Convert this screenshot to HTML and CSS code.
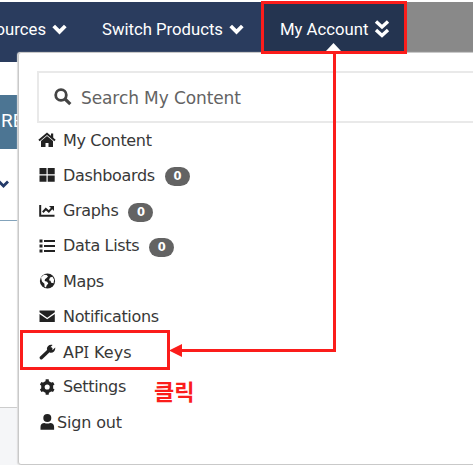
FILE: index.html
```html
<!DOCTYPE html>
<html lang="en">
<head>
<meta charset="utf-8">
<title>My Account</title>
<link rel="stylesheet" href="styles.css">
</head>
<body>
<nav class="nav">
  <div class="nav-item resources"><span>ources</span><svg class="chev" width="15" height="11" viewBox="0 0 15 11"><path d="M1.700 2l5.800 5.800L13.300 2"/></svg></div>
  <div class="nav-item products"><span>Switch Products</span><svg class="chev" width="15" height="11" viewBox="0 0 15 11"><path d="M1.700 2l5.800 5.800L13.300 2"/></svg></div>
  <div class="nav-item account"><span>My Account</span><svg class="chev double" width="16" height="20" viewBox="0 0 16 20"><path d="M2 2.500l6 5.500 6-5.500M2 11l6 5.500 6-5.500"/></svg></div>
  <div class="nav-rest"></div>
</nav>
<main class="page">
  <div class="banner">RE</div>
  <div class="filter"><svg width="10" height="9" viewBox="0 0 10 9"><path d="M-1 1.500L3.500 6 8 1.500" fill="none" stroke="#233a68" stroke-width="2.800"/></svg></div>
  <div class="blank"></div>
  <div class="footer"></div>
</main>
<section class="panel">
  <div class="search"><svg width="18" height="18" viewBox="0 0 18 18"><circle cx="7" cy="7" r="5.3" fill="none" stroke="#444" stroke-width="2.8"/><path d="M11 11l5.3 5.2" stroke="#444" stroke-width="3.2"/></svg><span>Search My Content</span></div>
  <ul class="menu">
    <li><svg viewBox="0 0 18 16"><path d="M1 8.500L9 1.800l8 6.700" fill="none" stroke="#222" stroke-width="2"/><path d="M13 1.500h2.200v5L13 4.800zM3 9l6-5 6 5v6h-4.500v-4h-3v4H3z"/></svg><span>My Content</span></li>
    <li><svg viewBox="0 0 18 16"><path d="M1.500 1h7v6.300h-7zM9.700 1h7v6.300h-7zM1.500 8.500h7v6.300h-7zM9.700 8.500h7v6.300h-7z"/></svg><span>Dashboards</span><b>0</b></li>
    <li><svg viewBox="0 0 18 16"><path d="M2.200 2v10.800h14.300M4.800 9.200l3-3.200 3 2.600 3.600-4" fill="none" stroke="#222" stroke-width="2"/><path d="M11 3h5v5z"/></svg><span>Graphs</span><b>0</b></li>
    <li><svg viewBox="0 0 18 16"><path d="M1.500 1.500h3v3h-3zM1.500 6.500h3v3h-3zM1.500 11.500h3v3h-3zM6 2h11v2H6zM6 7h11v2H6zM6 12h11v2H6z"/></svg><span>Data Lists</span><b>0</b></li>
    <li><svg viewBox="0 0 18 16"><circle cx="9.500" cy="8" r="7.600"/><path d="M3 4.500l3-2.700 2.600.1L10 3.500 8.500 5 7 6.200 6.700 8l2.400.8 1.200 1.700-1.600 1.800-.8 2.200-1.300-.8-.2-3L4 8.500zM12 4.500l2.500-.7 1.600 3-.6 3.500-2.300-.5-.7-2-1.500-.6z" fill="#fff"/></svg><span>Maps</span></li>
    <li><svg viewBox="0 0 18 16"><path d="M1.500 2.500h15.300v1.800L9.200 9.800 1.500 4.300zM1.500 6l7.700 5.300L16.800 6v8H1.500z"/></svg><span>Notifications</span></li>
    <li><svg viewBox="0 0 18 16"><path d="M12.800 4.800L3.300 13.800" stroke="#222" stroke-width="3.300" stroke-linecap="round"/><path d="M14.600.9l-2.300 2.300.5 2.100 2.100.5 2.300-2.300c.5 3.300-2.200 6-5.500 5.100L9 5.500C8.300 2.400 11.300-.1 14.600.9z"/></svg><span class="keys">AP<i>I</i> Keys</span></li>
    <li><svg viewBox="0 0 18 16"><circle cx="9.200" cy="8" r="4.300" fill="none" stroke="#222" stroke-width="3.500"/><path d="M7.400 3L7.700.3h3L11 3zM7.400 13l.3 2.700h3L11 13zM12.500 4l2.500-1 1.500 2.600-2.100 1.700zM12.500 12l2.500 1 1.500-2.600-2.100-1.700zM5.900 4l-2.500-1-1.500 2.600L4 7.300zM5.900 12l-2.500 1-1.500-2.600L4 8.700z"/></svg><span>Settings</span></li>
    <li class="signout"><svg viewBox="0 0 18 16"><circle cx="9.300" cy="4" r="4"/><path d="M2.500 15.800V13c0-2.500 1.500-4 4-4 1.500.8 4.100.8 5.600 0 2.500 0 4 1.500 4 4v2.800z"/></svg><span>Sign out</span></li>
  </ul>
</section>
<svg class="marks" width="473" height="465" viewBox="0 0 473 465">
  <path d="M326 51l7.500-8 7.500 8z" fill="#fff"/>
  <g fill="none" stroke="#fb1d1b" stroke-width="3">
    <path d="M262.500 2.500h143v50h-143zM21.500 331.500h147v37h-147zM334.500 52v298.500H180"/>
  </g>
  <path d="M169 350.500l13-6.500v13z" fill="#fb1d1b"/>
</svg>
<div class="callout">클릭</div>
</body>
</html>
```
FILE: styles.css
```css
* { box-sizing: border-box; }
body { margin: 0; width: 473px; height: 465px; overflow: hidden; position: relative; background: #fff; padding-top: 2px; font-family: "DejaVu Sans", sans-serif; }
.nav { height: 60px; display: flex; background: #2a3c5e; color: #fff; font: 16.7px Roboto, sans-serif; }
.nav-item { height: 54px; display: flex; align-items: center; white-space: nowrap; gap: 6px; flex: none; }
.chev { fill: none; stroke: #fff; stroke-width: 3.8; }
.resources { width: 102px; }
.resources span { width: 46px; display: flex; justify-content: flex-end; }
.products { width: 160px; }
.account { width: 144px; height: 50px; padding: 4px 0 0 18px; background: #243450; }
.double { stroke-width: 3.4; }
.nav-rest { flex: 1; height: 50px; background: #898989; }
.page { display: flex; flex-direction: column; height: 403px; padding-top: 33px; }
.banner { height: 54px; background: #4c7593; color: #fff; font: 19px/52px Roboto, sans-serif; padding-left: 1px; }
.filter { height: 72px; padding-top: 25px; border-bottom: 1px solid #83a3bb; }
.blank { height: 186px; }
.footer { flex: 1; background: #f5f6f8; border-top: 1px solid #ccc; }
.panel { position: absolute; left: 18px; top: 52px; width: 470px; height: 413px; background: #fff; border: 1px solid #c9c9c9; border-radius: 3px; padding: 18px 0 0 18px; box-shadow: -1px 0 1px #ddd; }
.search { height: 52px; border: 2px solid #e9e9e9; display: flex; align-items: center; gap: 9px; padding-left: 15px; color: #636363; font-size: 17px; }
.search span { letter-spacing: -.1px; padding-top: 1px; }
.menu { list-style: none; margin: 0; padding: 0 0 0 1px; }
.menu li { height: 35.25px; display: flex; align-items: center; font-size: 16px; letter-spacing: -.34px; color: #383838; white-space: nowrap; padding-bottom: 1px; }
.menu svg { width: 18px; height: 16px; margin-right: 7px; fill: #222; flex: none; }
.menu b { margin-left: 10px; margin-top: 3px; width: 25px; height: 19px; border-radius: 10px; background: #636363; color: #fff; font-size: 11.5px; line-height: 19px; text-align: center; }
.menu i { font-family: "Noto Sans", sans-serif; font-style: normal; }
.menu .keys { letter-spacing: 0; }
.menu .signout { letter-spacing: -.15px; }
.menu .signout svg { margin-right: 1px; }
.marks { position: absolute; left: 0; top: 0; }
.callout { position: absolute; left: 154px; top: 375px; color: #fb1d1b; font: bold 22px/30px "Noto Sans CJK KR", sans-serif; }
```
